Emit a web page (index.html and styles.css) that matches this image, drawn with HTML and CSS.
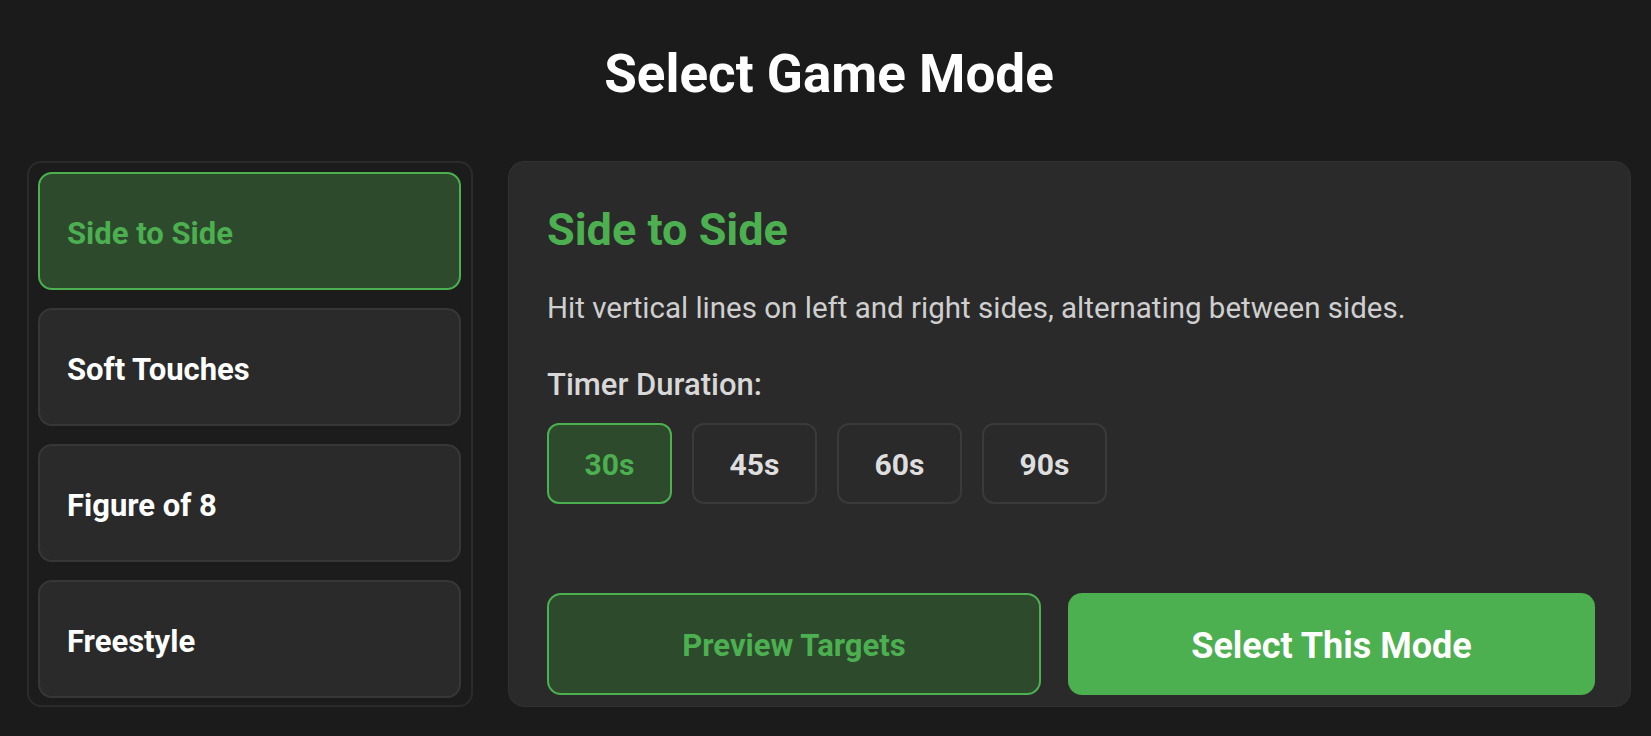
FILE: index.html
```html
<!DOCTYPE html>
<html lang="en">
<head>
<meta charset="utf-8">
<title>Select Game Mode</title>
<link rel="stylesheet" href="styles.css">
</head>
<body>
<div class="page">
  <h1 class="page-title">Select Game Mode</h1>
  <div class="layout">
    <div class="mode-list">
      <div class="mode-item selected">Side to Side</div>
      <div class="mode-item">Soft Touches</div>
      <div class="mode-item">Figure of 8</div>
      <div class="mode-item">Freestyle</div>
    </div>
    <div class="detail">
      <h2 class="detail-title">Side to Side</h2>
      <p class="detail-desc">Hit vertical lines on left and right sides, alternating between sides.</p>
      <div class="timer-label">Timer Duration:</div>
      <div class="timer-options">
        <div class="timer-btn selected">30s</div>
        <div class="timer-btn">45s</div>
        <div class="timer-btn">60s</div>
        <div class="timer-btn">90s</div>
      </div>
      <div class="actions">
        <div class="btn btn-preview">Preview Targets</div>
        <div class="btn btn-select">Select This Mode</div>
      </div>
    </div>
  </div>
</div>
</body>
</html>
```

FILE: styles.css
```css
* { box-sizing: border-box; }
html, body {
  margin: 0;
  padding: 0;
  background: #1b1b1b;
  font-family: Roboto, "Noto Sans", "Liberation Sans", sans-serif;
  color: #fff;
}
.page {
  width: 1651px;
  height: 736px;
  padding: 44px 20px 0 27px;
}
.page-title {
  margin: 0;
  font-size: 53px;
  line-height: 60px;
  font-weight: 700;
  text-align: center;
  color: #fff;
}
.layout {
  margin-top: 57px;
  display: grid;
  grid-template-columns: 446px 1fr;
  gap: 35px;
  height: 546px;
}
.mode-list {
  border: 2px solid #2b2b2b;
  border-radius: 14px;
  background: #1c1c1c;
  padding: 9px 10px 7px 9px;
  display: flex;
  flex-direction: column;
  gap: 18px;
}
.mode-item {
  flex: 1;
  display: flex;
  align-items: center;
  padding: 4px 0 0 27px;
  background: #2a2a2a;
  border: 2px solid #373737;
  border-radius: 14px;
  font-size: 31px;
  font-weight: 700;
  color: #fff;
}
.mode-item.selected {
  background: #2d4a2d;
  border-color: #4caf50;
  color: #4caf50;
}
.detail {
  background: #2a2a2a;
  border: 1px solid #323232;
  border-radius: 16px;
  padding: 42px 35px 11px 38px;
  display: flex;
  flex-direction: column;
}
.detail-title {
  margin: 0;
  font-size: 45px;
  line-height: 52px;
  font-weight: 700;
  color: #4caf50;
}
.detail-desc {
  margin: 34px 0 0;
  font-size: 29.5px;
  line-height: 36px;
  font-weight: 400;
  color: #cfcfcf;
}
.timer-label {
  margin-top: 41px;
  font-size: 31px;
  line-height: 36px;
  font-weight: 500;
  color: #d8d8d8;
}
.timer-options {
  margin-top: 20px;
  display: flex;
  gap: 20px;
}
.timer-btn {
  width: 125px;
  height: 81px;
  display: flex;
  align-items: center;
  justify-content: center;
  padding-top: 2px;
  border: 2px solid #3a3a3a;
  border-radius: 12px;
  background: #2a2a2a;
  font-size: 30px;
  font-weight: 700;
  color: #dedede;
}
.timer-btn.selected {
  background: #2d4a2d;
  border-color: #4caf50;
  color: #4caf50;
}
.actions {
  margin-top: auto;
  display: grid;
  grid-template-columns: 494fr 527fr;
  gap: 27px;
}
.btn {
  height: 102px;
  display: flex;
  align-items: center;
  justify-content: center;
  padding-top: 3px;
  border-radius: 14px;
  font-weight: 700;
}
.btn-preview {
  background: #2d4a2d;
  border: 2px solid #4caf50;
  color: #4caf50;
  font-size: 31px;
}
.btn-select {
  background: #4caf50;
  color: #fff;
  font-size: 36px;
}
```
